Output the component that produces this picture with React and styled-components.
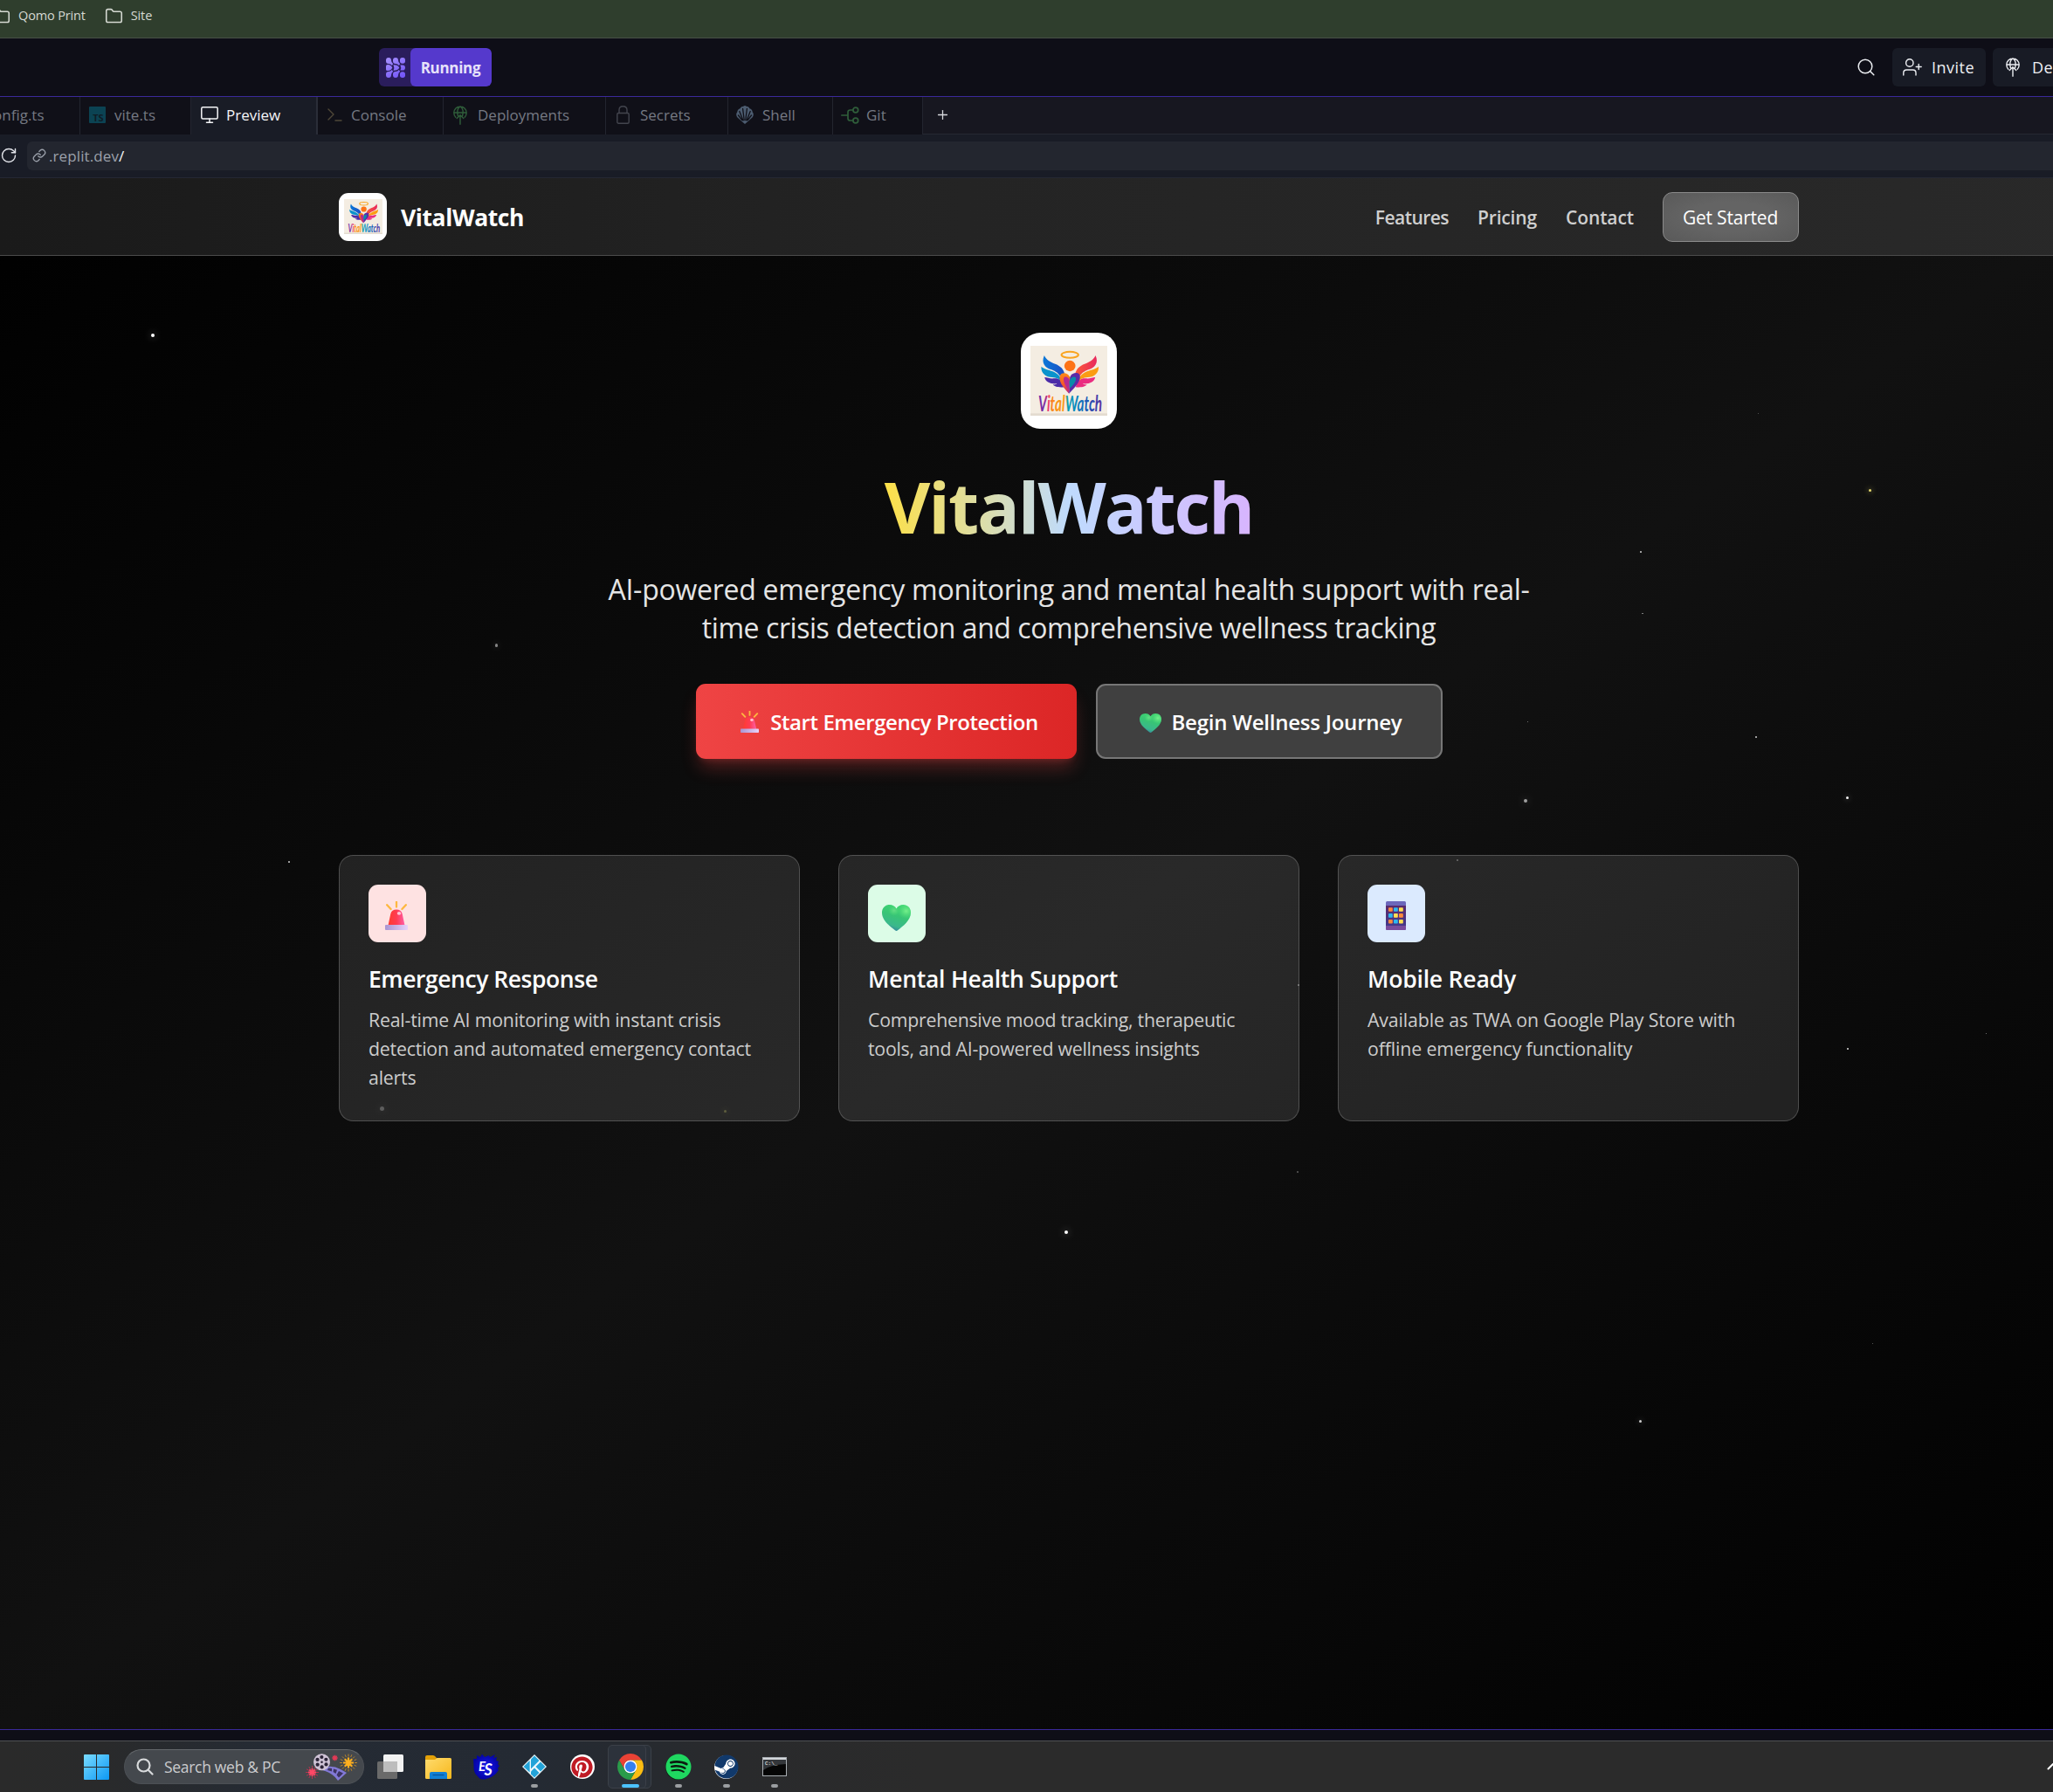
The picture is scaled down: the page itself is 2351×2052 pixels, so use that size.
import React from "react";
import styled, { createGlobalStyle, css } from "styled-components";
import { Folder, RotateCw, Plus } from "lucide-react";
import { FaPinterest, FaSpotify, FaSteam } from "react-icons/fa";

const UI = `"Open Sans", "Noto Sans", sans-serif`;

const Global = createGlobalStyle`
  * { box-sizing: border-box; }
  body { margin: 0; background: #0e0e17; font-family: ${UI}; overflow: hidden; }
  h1, h2, p { margin: 0; }
  button { font: inherit; border: 0; margin: 0; }
  svg { display: block; flex: none; }
`;

/* ---------- browser and editor chrome ---------- */

const Screen = styled.div`
  width: 2351px;
  height: 2052px;
  display: flex;
  flex-direction: column;
  overflow: hidden;
`;

const Bookmarks = styled.div`
  height: 44px;
  flex: none;
  display: flex;
  padding-top: 8px;
  background: #2f3e2d;
  border-bottom: 1px solid #464f46;
  color: #d5d9d2;
`;

const Bookmark = styled.div`
  display: flex;
  height: 20px;
  align-items: center;
  gap: 9px;
  margin-right: ${(p) => p.$after || 0}px;
  margin-left: ${(p) => p.$before || 0}px;
  font-size: 14.5px;
  letter-spacing: -0.15px;
  white-space: nowrap;
  span { padding-bottom: 2px; }
`;

const EditorBar = styled.header`
  height: 67px;
  flex: none;
  display: flex;
  align-items: center;
  padding-left: 434px;
  background: #0e0e17;
  border-bottom: 1px solid #3a299a;
`;

const RunControl = styled.button`
  display: flex;
  flex: none;
  height: 44px;
  padding: 0;
  border-radius: 6px;
  background: #2a1d5c;
  overflow: hidden;
`;

const RunIcon = styled.span`
  width: 36px;
  height: 100%;
  flex: none;
  display: flex;
  align-items: center;
  justify-content: center;
  padding-left: 2px;
`;

const RunLabel = styled.span`
  width: 93px;
  height: 100%;
  flex: none;
  display: flex;
  align-items: center;
  justify-content: center;
  padding-right: 1px;
  border-radius: 6px;
  background: #5539cc;
  color: #e6e1fa;
  font-size: 17px;
  font-weight: 700;
  letter-spacing: -0.3px;
`;

const EditorActions = styled.div`
  flex: none;
  margin-left: 1564px;
  display: flex;
  align-items: center;
  color: #eceef2;
`;

const ActionButton = styled.button`
  height: 44px;
  flex: none;
  display: flex;
  align-items: center;
  gap: ${(p) => p.$gap}px;
  width: 107px;
  padding: 0 0 0 ${(p) => p.$pad}px;
  margin-left: ${(p) => p.$before}px;
  border-radius: 6px;
  background: #181b25;
  color: inherit;
  font-size: 18px;
  letter-spacing: 0.5px;
  white-space: nowrap;
`;

const Tabs = styled.div`
  height: 43px;
  flex: none;
  display: flex;
  background: #171720;
`;

const Tab = styled.div`
  width: ${(p) => p.$w}px;
  flex: none;
  display: flex;
  align-items: center;
  padding-left: ${(p) => p.$pad}px;
  padding-bottom: 2px;
  border-right: 1px solid #23252f;
  background: #101018;
  color: #757983;
  font-size: 17px;
  white-space: nowrap;
  ${(p) =>
    p.$active &&
    css`
      background: #191c26;
      color: #f4f5f7;
      border-right: 2px solid #2a2d38;
    `}
`;

const TabIcon = styled.span`
  width: ${(p) => p.$w}px;
  flex: none;
  display: flex;
  align-items: center;
`;

const CutLabel = styled.span`
  margin-left: -8px;
`;

const AddTab = styled.div`
  flex: 1;
  display: flex;
  align-items: center;
  padding-left: 14px;
  padding-bottom: 1px;
  color: #d6d8dc;
  border-bottom: 1px solid #262932;
`;

const AddressRow = styled.div`
  height: 50px;
  flex: none;
  display: flex;
  align-items: center;
  padding-bottom: 1px;
  background: #191c26;
  border-bottom: 1px solid #252833;
  color: #e0e2e8;
`;

const Address = styled.div`
  flex: 1;
  height: 33px;
  margin-left: 11px;
  display: flex;
  align-items: center;
  gap: 3px;
  padding-left: 6px;
  border-radius: 6px 0 0 6px;
  background: #23262f;
  color: #9ba0aa;
  font-size: 17px;
  letter-spacing: 0.1px;
  b { font-weight: 400; color: #f5f6f8; }
`;

/* ---------- landing page ---------- */

const Site = styled.main`
  position: relative;
  width: 2448px;
  height: 1776px;
  flex: none;
  background: linear-gradient(to bottom right, #000 0%, #111 50%, #000 100%);
`;

const Sky = styled.div`
  position: absolute;
  inset: 0;
`;

const Star = styled.i`
  position: absolute;
  left: ${(p) => p.$x}px;
  top: ${(p) => p.$y}px;
  width: ${(p) => p.$s}px;
  height: ${(p) => p.$s}px;
  border-radius: ${(p) => (p.$s > 2 ? "50%" : 0)};
  background: ${(p) => p.$c || "#fff"};
  opacity: ${(p) => p.$o};
  box-shadow: ${(p) => (p.$s > 2 ? `0 0 ${p.$s * 2}px ${p.$c || "rgba(255,255,255,.5)"}` : "none")};
`;

const SiteBar = styled.nav`
  position: relative;
  height: 89px;
  padding: 0 388px;
  display: flex;
  align-items: center;
  justify-content: space-between;
  background: linear-gradient(90deg, #1a1a1a, #242424 45%, #292929);
  border-bottom: 1px solid #4b4b4b;
`;

const Brand = styled.div`
  display: flex;
  align-items: center;
  gap: 16px;
  color: #fff;
  font-size: 26.5px;
  font-weight: 700;
  letter-spacing: -0.4px;
  span { padding-top: 2px; }
`;

const LogoTile = styled.div`
  width: ${(p) => p.$size}px;
  height: ${(p) => p.$size}px;
  display: flex;
  align-items: center;
  justify-content: center;
  border-radius: ${(p) => p.$size * 0.2}px;
  background: #fff;
`;

const NavLinks = styled.div`
  display: flex;
  align-items: center;
  gap: 33px;
`;

const NavLink = styled.a`
  padding-top: 2px;
  color: #cfcfcf;
  font-size: 21px;
  font-weight: 600;
  letter-spacing: ${(p) => p.$tracking}px;
`;

const NavButton = styled.button`
  width: 156px;
  height: 57px;
  padding: 2px 1px 0 0;
  border: 1px solid #8b8b8b;
  border-radius: 11px;
  background: radial-gradient(ellipse, #646464 45%, #595959);
  color: #fff;
  font-size: 21px;
  letter-spacing: -0.2px;
`;

const Hero = styled.section`
  position: relative;
  padding-top: 88px;
  display: flex;
  flex-direction: column;
  align-items: center;
  text-align: center;
`;

const Title = styled.h1`
  margin-top: 32px;
  line-height: 114px;
  font-size: 81px;
  font-weight: 700;
  letter-spacing: -2.1px;
  padding: 0 1px;
  color: transparent;
  background: linear-gradient(to right, #fde047, #bfdbfe, #d8b4fe);
  -webkit-background-clip: text;
  background-clip: text;
`;

const Lead = styled.p`
  margin-top: 16px;
  font-size: 32px;
  line-height: 44px;
  color: #e5e5e5;
`;

const LeadLine = styled.span`
  display: block;
  letter-spacing: ${(p) => p.$tracking}px;
`;

const Actions = styled.div`
  display: flex;
  gap: 22px;
  margin-top: 42px;
`;

const HeroButton = styled.button`
  width: ${(p) => p.$w}px;
  height: 86px;
  padding: 1px 0 0 ${(p) => p.$pad}px;
  display: flex;
  align-items: center;
  justify-content: center;
  gap: ${(p) => p.$gap}px;
  border-radius: 11px;
  color: #fff;
  font-size: 24px;
  font-weight: 600;
  letter-spacing: ${(p) => p.$tracking}px;
  ${(p) =>
    p.$primary
      ? css`
          background: linear-gradient(to right, #ef4444, #dc2626);
          box-shadow: 0 14px 20px -4px rgba(239, 68, 68, 0.3), 0 5px 8px -5px rgba(239, 68, 68, 0.3);
        `
      : css`
          background: #404040;
          border: 2px solid #777;
        `}
`;

const Glyph = styled.span`
  padding-top: ${(p) => p.$drop}px;
`;

const Cards = styled.section`
  position: relative;
  width: 1672px;
  margin: 110px auto 0;
  display: grid;
  grid-template-columns: repeat(3, 1fr);
  gap: 44px;
`;

const Card = styled.article`
  height: 305px;
  padding: 33px;
  border: 1px solid rgba(255, 255, 255, 0.2);
  border-radius: 16.5px;
  background: rgba(255, 255, 255, 0.1);
`;

const CardIcon = styled.div`
  width: 66px;
  height: 66px;
  display: flex;
  align-items: center;
  justify-content: center;
  padding-top: ${(p) => p.$drop}px;
  padding-right: 2px;
  border-radius: 11px;
  background: ${(p) => p.$tint};
`;

const CardTitle = styled.h2`
  margin-top: 23px;
  height: 38px;
  line-height: 38px;
  font-size: 26.5px;
  font-weight: 600;
  color: #fff;
  letter-spacing: ${(p) => p.$tracking}px;
`;

const CardText = styled.p`
  margin-top: 11px;
  font-size: 21.3px;
  line-height: 33px;
  color: #cccccc;
  letter-spacing: ${(p) => p.$tracking}px;
`;

/* ---------- desktop taskbar ---------- */

const EditorFoot = styled.div`
  height: 13px;
  flex: none;
  background: #0e0e17;
  border-top: 1px solid #3a299a;
`;

const Taskbar = styled.footer`
  height: 59px;
  flex: none;
  display: flex;
  align-items: flex-start;
  padding: 4px 0 0 82px;
  border-top: 1px solid #505254;
  background: linear-gradient(90deg, #2a2a2a 0%, #292a2b 5%, #252b34 13%, #242a33 26%, #292a2c 36%, #2b2b2b 45%, #2b2b2b 100%);
`;

const StartSlot = styled.div`
  width: 60px;
  height: 50px;
  display: flex;
  align-items: center;
  padding-left: 14px;
`;

const SearchPill = styled.div`
  width: 275px;
  height: 40px;
  margin: 5px 2px 0 0;
  display: flex;
  align-items: center;
  padding-left: 13px;
  border-radius: 20px;
  background: #44484d;
  border: 1px solid #4c5055;
  border-top-color: #64686c;
  color: #cbccce;
  font-size: 17.5px;
  letter-spacing: -0.3px;
  white-space: nowrap;
`;

const SearchText = styled.span`
  width: 161px;
  margin-left: 12px;
`;

const TaskSlot = styled.div`
  position: relative;
  width: ${(p) => (p.$active ? 49 : 55)}px;
  height: 50px;
  flex: none;
  display: flex;
  align-items: center;
  justify-content: center;
  &::after {
    content: "";
    position: absolute;
    bottom: 1px;
    left: calc(50% - ${(p) => (p.$active ? 10 : 4)}px);
    width: ${(p) => (p.$active ? 20 : 8)}px;
    height: 4px;
    border-radius: 2px;
    background: ${(p) => (p.$active ? "#4cc2ff" : p.$open ? "#9b9ea1" : "transparent")};
  }
`;

const ActiveTile = styled.div`
  width: 50px;
  height: 50px;
  margin: 0 3px 0 2px;
  flex: none;
  display: flex;
  align-items: center;
  border: 1px solid #3b4048;
  border-radius: 5px;
  background: #2c323b;
  box-shadow: inset -5px 0 0 #2a3038, inset -6px 0 0 #3b4048;
`;

const Disc = styled.span`
  width: ${(p) => p.$size}px;
  height: ${(p) => p.$size}px;
  display: flex;
  align-items: center;
  justify-content: center;
  border-radius: 50%;
  background: ${(p) => p.$bg};
  color: ${(p) => p.$fg};
`;

const Tray = styled.div`
  margin-left: auto;
  width: 7px;
  height: 50px;
  padding-top: 20px;
  overflow: hidden;
`;

/* ---------- drawings ---------- */

const Wing = ({ a, b, c }) => (
  <g>
    <path fill={c} d="M47 108C56 108 66 114 78 112C92 110 106 116 112 142C92 144 78 140 75 133C82 134 86 132 88 130C66 132 50 124 47 108Z" />
    <path fill={b} d="M36 71C44 80 60 82 74 88C92 96 102 108 106 126C98 114 86 108 72 108C52 108 34 94 36 71Z" />
    <path fill={a} d="M46 33C52 48 66 56 82 62C98 68 112 80 114 100C110 96 104 96 100 108C94 94 84 88 70 82C50 76 34 60 46 33Z" />
  </g>
);

const VitalLogo = ({ w, h, id }) => (
  <svg width={w} height={h} viewBox="0 0 255 240" preserveAspectRatio="none">
    <defs>
      <linearGradient id={id + "l"}><stop offset="0" stopColor="#0a78d8" /><stop offset="1" stopColor="#1c4ec4" /></linearGradient>
      <linearGradient id={id + "r"}><stop offset="0" stopColor="#e8285e" /><stop offset="1" stopColor="#fb5a36" /></linearGradient>
      <linearGradient id={id + "h"} x2="0" y2="1"><stop offset="0" stopColor="#ff8a14" /><stop offset=".6" stopColor="#f4552c" /><stop offset="1" stopColor="#b01f8c" /></linearGradient>
      <linearGradient id={id + "t"}>
        <stop offset="0" stopColor="#6a2fa8" /><stop offset=".1" stopColor="#7a2ba0" /><stop offset=".16" stopColor="#f03a6a" />
        <stop offset=".22" stopColor="#fb8a1a" /><stop offset=".42" stopColor="#fb9a1c" /><stop offset=".46" stopColor="#0a9cb4" />
        <stop offset=".6" stopColor="#0f86c0" /><stop offset=".8" stopColor="#2352b4" /><stop offset="1" stopColor="#5a2fa0" />
      </linearGradient>
    </defs>
    <rect width="255" height="240" fill="#f4ede2" />
    <rect y="232" width="255" height="8" fill="#e3dbd0" />
    <ellipse cx="131" cy="31" rx="28" ry="10.500" fill="none" stroke="#f9a41f" strokeWidth="6" />
    <Wing a={`url(#${id}l)`} b="#0a93cc" c="#4b2ba8" />
    <g transform="translate(262 0) scale(-1 1)"><Wing a={`url(#${id}r)`} b="#fb9c12" c="#ea2c80" /></g>
    <circle cx="131" cy="69" r="18.500" fill="#fd7316" />
    <path fill={`url(#${id}h)`} d="M128 164C104 138 92 118 99 101C106 88 126 94 131 108Z" />
    <path fill="#5a2aa8" d="M128 164C154 136 170 116 163 99C156 88 136 94 131 108Z" />
    <path fill="#b42a92" d="M129 156C114 136 106 118 112 108C119 104 128 110 130 120Z" />
    <path fill="#0b8aa8" d="M130 146C144 134 154 120 150 108C142 102 130 112 129 124Z" />
    <text x="26" y="226" textLength="212" lengthAdjust="spacingAndGlyphs" fontFamily="Lato, sans-serif" fontSize="76" fontStyle="italic" fontWeight="700" fill={`url(#${id}t)`}>VitalWatch</text>
  </svg>
);

const Siren = ({ w, h }) => (
  <svg width={w} height={h} viewBox="0 0 26 33" preserveAspectRatio="none">
    <defs>
      <linearGradient id="sirenDome"><stop offset="0" stopColor="#ff3b30" /><stop offset=".5" stopColor="#ff3b52" /><stop offset="1" stopColor="#ff5fa8" /></linearGradient>
      <linearGradient id="sirenBase"><stop offset="0" stopColor="#a995d2" /><stop offset="1" stopColor="#e8d2fa" /></linearGradient>
    </defs>
    <path d="M13 .8V6.500M2.200 4.200L6.600 9M23.800 4.200L19.400 9" stroke="#fdb840" strokeWidth="2.300" strokeLinecap="round" />
    <path d="M3.500 27.500L6.300 14.500C7 11 9.500 9.500 13 9.500C16.500 9.500 19 11 19.700 14.500L22.500 27.500Z" fill="url(#sirenDome)" />
    <ellipse cx="16" cy="13.800" rx="2.200" ry="1.900" fill="#ffc4d4" />
    <rect x="0" y="27" width="26" height="6" rx="1" fill="url(#sirenBase)" />
  </svg>
);

const GreenHeart = ({ w, h }) => (
  <svg width={w} height={h} viewBox="0 0 33 30" preserveAspectRatio="none">
    <defs>
      <linearGradient id="heartBase" x1=".7" y1="0" x2=".35" y2="1"><stop offset="0" stopColor="#3fd872" /><stop offset=".45" stopColor="#38c476" /><stop offset=".8" stopColor="#3ab88c" /><stop offset="1" stopColor="#3481a0" /></linearGradient>
      <radialGradient id="heartGlow" cx=".84" cy=".24" r=".3"><stop offset="0" stopColor="#76f08c" /><stop offset="1" stopColor="#52dc78" stopOpacity="0" /></radialGradient>
      <radialGradient id="heartGlow2" cx=".42" cy=".22" r=".2"><stop offset="0" stopColor="#66dc86" /><stop offset="1" stopColor="#52dc78" stopOpacity="0" /></radialGradient>
    </defs>
    {["heartBase", "heartGlow", "heartGlow2"].map((g) => (
      <path key={g} fill={`url(#${g})`} d="M16.500 4.600C18 1.600 21 0 24.300 0C29.200 0 33 3.800 33 9C33 18 24 24.500 18 29.300C17 30.200 16 30.200 15 29.300C9 24.500 0 18 0 9C0 3.800 3.800 0 8.700 0C12 0 15 1.600 16.500 4.600Z" />
    ))}
  </svg>
);

const Phone = () => (
  <svg width="23" height="33" viewBox="0 0 23 33">
    <defs><linearGradient id="phoneBody" x2="0" y2="1"><stop offset="0" stopColor="#5a2a6c" /><stop offset="1" stopColor="#44388a" /></linearGradient></defs>
    <rect width="23" height="33" rx="1.500" fill="#6c68bb" />
    <rect y="5" width="23" height="23" fill="url(#phoneBody)" />
    <path d="M0 28H23V31.500Q23 33 21.500 33H1.500Q0 33 0 31.500Z" fill="#7a4c9c" />
    {["#ff8a3c", "#2cb8f0", "#ffe052", "#2cb8f0", "#ffe052", "#ff8a3c", "#ff8a3c", "#2cb8f0", "#ffe052"].map((c, i) => (
      <rect key={i} x={3 + (i % 3) * 6} y={7.2 + Math.floor(i / 3) * 6.9} width="4.800" height="4.600" rx=".8" fill={c} />
    ))}
  </svg>
);

const DotsMark = () => (
  <svg width="22" height="23" viewBox="0 0 22 23">
    <defs><linearGradient id="dots" gradientUnits="userSpaceOnUse" x1="0" y1="0" x2="16" y2="23"><stop offset="0" stopColor="#a892ff" /><stop offset="1" stopColor="#7558f8" /></linearGradient></defs>
    <g fill="url(#dots)">
      <path d="M0 3Q0 0 3 0Q6 0 6 3Q6 5.500 8.200 7.300L6.800 9Q5.500 7 3 7Q0 6.800 0 4Z" />
      <path d="M8 3Q8 0 11 0Q14 0 14 3Q14 5.500 16.200 7.300L14.800 9Q13.500 7 11 7Q8 6.800 8 4Z" />
      <rect x="16" y="0" width="6" height="6.800" rx="2.700" />
      <path d="M0 9.500Q0 8 2 8Q5.800 8 7.300 11.500Q5.800 15 2 15Q0 15 0 13.500Z" />
      <path d="M8.500 8.200Q13.500 8 15.300 11.500Q13.500 15 8.500 14.800Q10 11.500 8.500 8.200Z" />
      <path d="M16.400 8.400H19Q22 8.400 22 11.500Q22 14.600 19 14.600H16.400Q18 11.500 16.400 8.400Z" />
      <path d="M0 20Q0 23 3 23Q6 23 6 20Q6 17.500 8.200 15.700L6.800 14Q5.500 16 3 16Q0 16.200 0 19Z" />
      <path d="M8 20Q8 23 11 23Q14 23 14 20Q14 17.500 16.200 15.700L14.800 14Q13.500 16 11 16Q8 16.200 8 19Z" />
      <rect x="16" y="16.200" width="6" height="6.800" rx="2.700" />
    </g>
  </svg>
);

const Outline = styled.svg`
  fill: none;
  stroke: ${(p) => p.$c || "currentColor"};
  stroke-width: ${(p) => p.$sw || 1.4};
  stroke-linecap: round;
  stroke-linejoin: round;
`;

const DeployIcon = ({ color }) => (
  <Outline width="16" height="22" viewBox="0 0 16 22" $c={color} $sw={1.4}>
    <path d="M2.800 13.200A7.200 7.200 0 1 1 13.200 13.200M.8 8H15.200M5.400 11.500C3.900 7 5 2.500 8 .9C11 2.500 12.100 7 10.600 11.500M8 21.200V11M4.200 14.500L8 10.800L11.800 14.500" />
  </Outline>
);

const LensIcon = () => (
  <Outline width="20" height="20" viewBox="0 0 20 20" $sw={1.5}><circle cx="9" cy="9" r="7.800" /><path d="M14.500 14.500L18.800 18.800" /></Outline>
);

const InviteIcon = () => (
  <Outline width="22" height="20" viewBox="0 0 22 20" $sw={1.4}><circle cx="7.800" cy="5" r="4.200" /><path d="M.8 19V16.500Q.8 13 4.500 13H11.500Q15 13 15 16.500V19M15.200 9.500H21.200M18.200 6.500V12.500" /></Outline>
);

const TsIcon = () => (
  <svg width="19" height="19" viewBox="0 0 19 19"><rect width="19" height="19" rx="1" fill="#0b4353" /><text x="4.200" y="17" fontFamily="Open Sans, sans-serif" fontWeight="700" fontSize="11" fill="#101c26">TS</text></svg>
);

const MonitorIcon = () => (
  <Outline width="20" height="19" viewBox="0 0 20 19" $sw={1.5}><rect x=".8" y=".8" width="18.400" height="13.200" rx="1.500" /><path d="M10 14V18M6.500 18.200H13.500" /></Outline>
);

const ConsoleIcon = () => (
  <Outline width="17" height="15" viewBox="0 0 17 15" $c="#4f4838"><path d="M1 1L7 7L1 13M9 14H16" /></Outline>
);

const LockIcon = () => (
  <Outline width="15" height="21" viewBox="0 0 15 21" $c="#43454e"><rect x=".8" y="8.500" width="13.400" height="11.700" rx="1.500" /><path d="M3 8.500V5Q3 .8 7.500 .8Q12 .8 12 5V8.500" /></Outline>
);

const ShellIcon = () => (
  <svg width="20" height="21" viewBox="0 0 20 21">
    <path fill="#4c5c70" d="M10 21L6.500 18L1.500 13.500C-.5 11 .2 8.500 1.200 7.500C1.500 5 3 3.500 4.500 3.200C5.500 1.200 7 .8 8 1C9 -.2 11 -.2 12 1C13 .8 14.500 1.200 15.500 3.200C17 3.500 18.500 5 18.800 7.500C19.800 8.500 20.500 11 18.500 13.500L13.500 18Z" />
    <path stroke="#101018" strokeWidth="1.300" strokeLinecap="round" d="M9.200 16.500L7.600 3.500M10.800 16.500L12.400 3.500M8 17L3.800 6.500M12 17L16.200 6.500M6.800 16.500L2.500 11M13.200 16.500L17.500 11" />
  </svg>
);

const GitIcon = () => (
  <Outline width="21" height="20" viewBox="0 0 21 20" $c="#2f5e3a" $sw={1.7}><circle cx="16.800" cy="4" r="2.900" /><circle cx="16.800" cy="16" r="2.900" /><path d="M.9 10H8M13.900 4H10.500Q8 4 8 6.500V13.500Q8 16 10.500 16H13.900" /></Outline>
);

const WindowsLogo = () => (
  <svg width="29" height="29" viewBox="0 0 29 29">
    <defs><linearGradient id="win" x2="1" y2="1"><stop offset="0" stopColor="#7adcff" /><stop offset="1" stopColor="#0c98f5" /></linearGradient></defs>
    <path fill="url(#win)" d="M1 0H14V14H0V1Q0 0 1 0ZM15 0H28Q29 0 29 1V14H15ZM0 15H14V29H1Q0 29 0 28ZM15 15H29V28Q29 29 28 29H15Z" />
  </svg>
);

const rays = (n, cx, cy, r1, r2) =>
  Array.from({ length: n }, (_, i) => {
    const t = (i / n) * Math.PI * 2;
    return `M${cx + r1 * Math.cos(t)} ${cy + r1 * Math.sin(t)}L${cx + r2 * Math.cos(t)} ${cy + r2 * Math.sin(t)}`;
  }).join("");

const FilmDoodle = () => (
  <svg width="61" height="31" viewBox="0 0 61 31">
    <path d={rays(16, 50, 10.5, 7, 10)} stroke="#b9862e" strokeWidth="1" />
    <path d={rays(8, 50, 10.5, 0, 6)} stroke="#ffb01f" strokeWidth="2.200" />
    <path d={rays(12, 8.5, 21.5, 3, 7.5)} stroke="#b83450" strokeWidth="1" />
    <path d={rays(8, 8.5, 21.5, 0, 4.5)} stroke="#ff4866" strokeWidth="1.800" />
    <path d={rays(8, 34.5, 5, 0, 3.2)} stroke="#e23a56" strokeWidth="1.500" />
    <path d="M20 17Q30 12 41 18L48 22L38 31Q32 22 20 19Z" fill="#8279d6" />
    <path d="M27 16.500L31 17L31 20.500L26 19ZM33 17.500L37 18.800L35.500 23L32.500 21ZM39 20L44 22.500L39 27.500L36.500 24.500Z" fill="#3d3360" />
    <circle cx="19.500" cy="9.700" r="9.500" fill="#cfc3d6" />
    {[0, 1, 2, 3, 4, 5].map((i) => (
      <circle key={i} cx={19.5 + 5.7 * Math.cos((i * Math.PI) / 3 + 0.5)} cy={9.7 + 5.7 * Math.sin((i * Math.PI) / 3 + 0.5)} r="2.100" fill="#2c2438" />
    ))}
    <circle cx="19.500" cy="9.700" r="1.300" fill="#2c2438" />
  </svg>
);

const TaskViewIcon = () => (
  <svg width="30" height="28" viewBox="0 0 30 28">
    <rect x="0" y="8" width="23" height="20" rx="1.500" fill="#6a6a6a" />
    <rect x="7" y="0" width="23" height="20" rx="1.500" fill="#f2f2f2" />
    <rect x="7" y="8" width="16" height="12" fill="#bdbdbd" />
  </svg>
);

const ExplorerIcon = () => (
  <svg width="30" height="27" viewBox="0 0 30 27">
    <defs><linearGradient id="exp" x2="1" y2="1"><stop offset="0" stopColor="#ffdc6e" /><stop offset="1" stopColor="#f7b71c" /></linearGradient></defs>
    <path d="M0 2Q0 0 2 0H9Q11 0 12.500 2.500L14 5H0Z" fill="#e2a008" />
    <path d="M0 5H11L13.500 3H28.500Q30 3 30 4.500V25.500Q30 27 28.500 27H1.500Q0 27 0 25.500Z" fill="url(#exp)" />
    <path d="M5 27V21Q5 19 7 19H23Q25 19 25 21V27Z" fill="#1280d4" />
    <path d="M8.500 22.500H21.500" stroke="#0a549c" strokeWidth="1.300" />
  </svg>
);

const EsIcon = () => (
  <svg width="30" height="30" viewBox="0 0 30 30">
    <defs><radialGradient id="es"><stop offset="0" stopColor="#1818f0" /><stop offset="1" stopColor="#0404a4" /></radialGradient></defs>
    <path fill="url(#es)" d="M4 2L8 4L10 .5L13 4L18 2L19 4L25 1L23 5L27 4L26 8L29 9L28 12L30 14L28 17L29 19Q24 27 15 29Q8 31 5 26Q0 22 .5 14L0 6L4 6Z" />
    <text x="6" y="19.500" fontFamily="Lato, sans-serif" fontStyle="italic" fontWeight="700" fontSize="15" fill="#fff">E</text>
    <text x="12.500" y="25" fontFamily="Lato, sans-serif" fontStyle="italic" fontWeight="700" fontSize="18" fill="#fff">S</text>
  </svg>
);

const KodiIcon = () => (
  <svg width="28" height="28" viewBox="0 0 28 28">
    <path d="M14 0L28 14L14 28L0 14Z" fill="#eef8fc" />
    <g fill="#23a3d8">
      <path d="M14 1.500L19.500 7L10 16.500V5.500Z" />
      <path d="M8.600 7V20.600L1.500 14Z" />
      <path d="M21 8.500L26.500 14L21 19.500L15.500 14Z" />
      <path d="M14 15.500L19.500 21L14 26.500L10 22.500V19.500Z" />
    </g>
  </svg>
);

const ChromeIcon = () => (
  <svg width="30" height="30" viewBox="0 0 48 48">
    <circle cx="24" cy="24" r="12.500" fill="#fff" />
    <path fill="#e94235" d="M3.220 12A24 24 0 0 1 44.780 12L24 12A12 12 0 0 0 13.600 30Z" />
    <path fill="#fbbd12" d="M44.780 12A24 24 0 0 1 24 48L34.400 30A12 12 0 0 0 24 12Z" />
    <path fill="#2a9b4a" d="M24 48A24 24 0 0 1 3.220 12L13.600 30A12 12 0 0 0 34.400 30Z" />
    <circle cx="24" cy="24" r="9.800" fill="#3580ee" />
  </svg>
);

const TerminalIcon = () => (
  <svg width="28" height="22" viewBox="0 0 28 22">
    <rect x=".5" y=".5" width="27" height="21" fill="#050505" stroke="#a8adb2" />
    <path d="M1 1H27V3H1Z" fill="#d2d6da" />
    <path d="M1 3H27V8Q8 9 1 15Z" fill="#33363a" />
    <text x="3" y="9" fontFamily="Liberation Mono, monospace" fontSize="6" fill="#fff">C:\_</text>
  </svg>
);

/* ---------- content ---------- */

const stars = [
  [174.5, 384, 4, 1], [2141.5, 561, 3, 0.9, "#fff07a"], [1879, 632, 2, 0.6], [1881, 702.5, 1.5, 0.45], [568.5, 739, 3.5, 0.5],
  [1749.5, 826.5, 1, 0.4], [2011, 844, 2, 0.6], [1747, 917, 4, 0.6], [2115.5, 913.5, 3, 0.95], [331, 987, 2, 0.6], [1669, 985, 2, 0.25],
  [2116, 1201, 2, 0.65], [2274, 1183, 1, 0.4], [1487, 1128, 2, 0.3], [437, 1269, 5, 0.25], [830.5, 1272.5, 3, 0.3, "#d8d860"],
  [1486, 1342, 1.5, 0.25], [1221, 1411, 4.5, 1], [1878.5, 1627.5, 3, 0.8], [2144.5, 1538, 1, 0.3], [2013, 473, 1, 0.25],
];

const tabs = [
  { w: 92, pad: 0, label: "onfig.ts", cut: true },
  { w: 127, pad: 10, icon: <TsIcon />, iw: 29, label: "vite.ts" },
  { w: 145, pad: 11, icon: <MonitorIcon />, iw: 29, label: "Preview", active: true },
  { w: 144, pad: 11, icon: <ConsoleIcon />, iw: 27, label: "Console" },
  { w: 186, pad: 11, icon: <DeployIcon color="#2f5e3a" />, iw: 28, label: "Deployments" },
  { w: 140, pad: 12, icon: <LockIcon />, iw: 27, label: "Secrets" },
  { w: 120, pad: 9, icon: <ShellIcon />, iw: 30, label: "Shell" },
  { w: 103, pad: 9, icon: <GitIcon />, iw: 29, label: "Git" },
];

const cards = [
  { icon: <Siren w={26} h={33} />, drop: 5, tint: "#fee2e2", title: "Emergency Response", tt: -0.45, bt: -0.2, text: "Real-time AI monitoring with instant crisis detection and automated emergency contact alerts" },
  { icon: <GreenHeart w={33} h={30} />, drop: 9, tint: "#dcfce7", title: "Mental Health Support", tt: -0.25, bt: -0.25, text: "Comprehensive mood tracking, therapeutic tools, and AI-powered wellness insights" },
  { icon: <Phone />, drop: 5, tint: "#dbeafe", title: "Mobile Ready", tt: -0.2, bt: -0.12, text: "Available as TWA on Google Play Store with offline emergency functionality" },
];

export default function App() {
  return (
    <Screen>
      <Global />
      <Bookmarks>
        <Bookmark $before={-9} $after={22}><Folder size={21} strokeWidth={1.8} /><span>Qomo Print</span></Bookmark>
        <Bookmark><Folder size={21} strokeWidth={1.8} /><span>Site</span></Bookmark>
      </Bookmarks>

      <EditorBar>
        <RunControl>
          <RunIcon><DotsMark /></RunIcon>
          <RunLabel>Running</RunLabel>
        </RunControl>
        <EditorActions>
          <LensIcon />
          <ActionButton $before={20} $pad={12} $gap={11}><InviteIcon />Invite</ActionButton>
          <ActionButton $before={8} $pad={15} $gap={14}><DeployIcon />Deploy</ActionButton>
        </EditorActions>
      </EditorBar>

      <Tabs>
        {tabs.map((t) => (
          <Tab key={t.label} $w={t.w} $pad={t.pad} $active={t.active}>
            {t.icon && <TabIcon $w={t.iw}>{t.icon}</TabIcon>}
            {t.cut ? <CutLabel>{t.label}</CutLabel> : t.label}
          </Tab>
        ))}
        <AddTab><Plus size={17} strokeWidth={1.8} /></AddTab>
      </Tabs>

      <AddressRow>
        <RotateCw size={20} strokeWidth={1.7} />
        <Address>
          <Outline width="16" height="16" viewBox="0 0 24 24" $sw={2}>
            <path d="M10 13a5 5 0 0 0 7.540.540l3-3a5 5 0 0 0-7.070-7.070l-1.720 1.710M14 11a5 5 0 0 0-7.540-.540l-3 3a5 5 0 0 0 7.070 7.070l1.710-1.710" />
          </Outline>
          <span>.replit.dev<b>/</b></span>
        </Address>
      </AddressRow>

      <Site>
        <Sky>{stars.map(([x, y, s, o, c]) => <Star key={`${x}-${y}`} $x={x - s / 2} $y={y - 204 - s / 2} $s={s} $o={o} $c={c} />)}</Sky>
        <SiteBar>
          <Brand>
            <LogoTile $size={55}><VitalLogo w={44} h={40} id="s" /></LogoTile>
            <span>VitalWatch</span>
          </Brand>
          <NavLinks>
            <NavLink $tracking={-0.55}>Features</NavLink>
            <NavLink $tracking={-0.15}>Pricing</NavLink>
            <NavLink $tracking={-0.1}>Contact</NavLink>
            <NavButton>Get Started</NavButton>
          </NavLinks>
        </SiteBar>

        <Hero>
          <LogoTile $size={110}><VitalLogo w={88} h={80} id="b" /></LogoTile>
          <Title>VitalWatch</Title>
          <Lead>
            <LeadLine $tracking={-0.27}>AI-powered emergency monitoring and mental health support with real-</LeadLine>
            <LeadLine $tracking={-0.44}>time crisis detection and comprehensive wellness tracking</LeadLine>
          </Lead>
          <Actions>
            <HeroButton $primary $w={436} $pad={8} $gap={13} $tracking={-0.43}>
              <Glyph $drop={0}><Siren w={21} h={25} /></Glyph>Start Emergency Protection
            </HeroButton>
            <HeroButton $w={397} $pad={5} $gap={11} $tracking={-0.23}>
              <Glyph $drop={3}><GreenHeart w={25} h={22} /></Glyph>Begin Wellness Journey
            </HeroButton>
          </Actions>
        </Hero>

        <Cards>
          {cards.map((c) => (
            <Card key={c.title}>
              <CardIcon $tint={c.tint} $drop={c.drop}>{c.icon}</CardIcon>
              <CardTitle $tracking={c.tt}>{c.title}</CardTitle>
              <CardText $tracking={c.bt}>{c.text}</CardText>
            </Card>
          ))}
        </Cards>
      </Site>

      <EditorFoot />
      <Taskbar>
        <StartSlot><WindowsLogo /></StartSlot>
        <SearchPill>
          <Outline width="20" height="20" viewBox="0 0 20 20" $sw={2.2} $c="#d8dadc"><circle cx="8.500" cy="8.500" r="7" /><path d="M13.700 13.700L18.500 18.500" /></Outline>
          <SearchText>Search web &amp; PC</SearchText>
          <FilmDoodle />
        </SearchPill>
        <TaskSlot><TaskViewIcon /></TaskSlot>
        <TaskSlot><ExplorerIcon /></TaskSlot>
        <TaskSlot><EsIcon /></TaskSlot>
        <TaskSlot $open><KodiIcon /></TaskSlot>
        <TaskSlot><Disc $size={28} $bg="#fff" $fg="#c01a24"><FaPinterest size={25} /></Disc></TaskSlot>
        <ActiveTile><TaskSlot $active><ChromeIcon /></TaskSlot></ActiveTile>
        <TaskSlot $open><Disc $size={29} $bg="#0c1a10" $fg="#1fd760"><FaSpotify size={30} /></Disc></TaskSlot>
        <TaskSlot $open><Disc $size={27} $bg="#fff" $fg="#11396b"><FaSteam size={28} /></Disc></TaskSlot>
        <TaskSlot $open><TerminalIcon /></TaskSlot>
        <Tray>
          <Outline width="14" height="9" viewBox="0 0 14 9" $sw={2} $c="#fff"><path d="M1.500 7.500L7 2L12.500 7.500" /></Outline>
        </Tray>
      </Taskbar>
    </Screen>
  );
}
